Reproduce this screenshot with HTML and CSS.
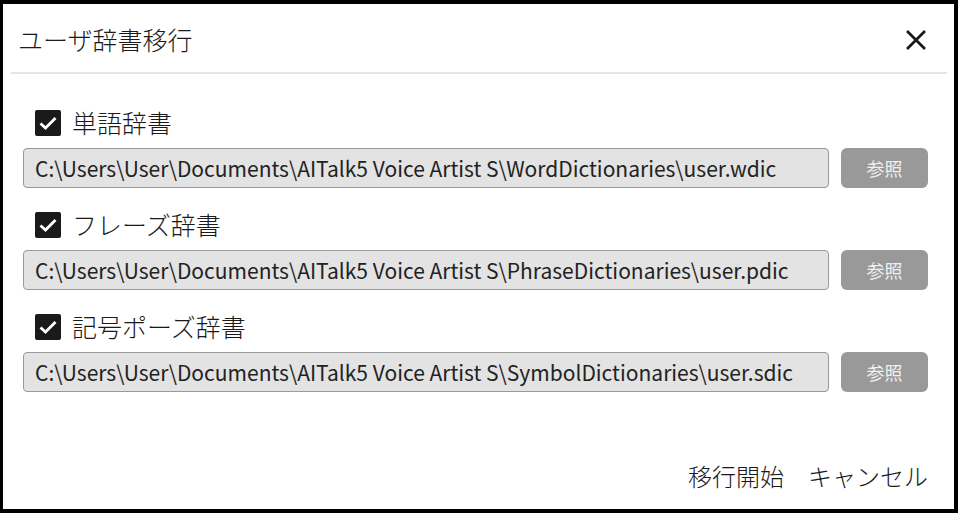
FILE: index.html
```html
<!DOCTYPE html>
<html lang="ja">
<head>
<meta charset="utf-8">
<link rel="stylesheet" href="styles.css">
</head>
<body>
<div class="dialog">
  <div class="header">
    <div class="title">ユーザ辞書移行</div>
    <svg class="close" width="22" height="22" viewBox="0 0 22 22"><path d="M2 2 L20 20 M20 2 L2 20" stroke="#1a1a1a" stroke-width="2.8" fill="none"/></svg>
  </div>
  <div class="sep"></div>
  <div class="body">
    <div class="group">
      <div class="check-row">
        <span class="box"><svg width="26" height="26" viewBox="0 0 26 26"><path d="M5.5 13.5 L10.5 18 L20.5 8" stroke="#fff" stroke-width="2.8" fill="none"/></svg></span>
        <span class="label">単語辞書</span>
      </div>
      <div class="path-row">
        <div class="path">C:\Users\User\Documents\AITalk5 Voice Artist S\WordDictionaries\user.wdic</div>
        <button class="browse">参照</button>
      </div>
    </div>
    <div class="group">
      <div class="check-row">
        <span class="box"><svg width="26" height="26" viewBox="0 0 26 26"><path d="M5.5 13.5 L10.5 18 L20.5 8" stroke="#fff" stroke-width="2.8" fill="none"/></svg></span>
        <span class="label">フレーズ辞書</span>
      </div>
      <div class="path-row">
        <div class="path">C:\Users\User\Documents\AITalk5 Voice Artist S\PhraseDictionaries\user.pdic</div>
        <button class="browse">参照</button>
      </div>
    </div>
    <div class="group">
      <div class="check-row">
        <span class="box"><svg width="26" height="26" viewBox="0 0 26 26"><path d="M5.5 13.5 L10.5 18 L20.5 8" stroke="#fff" stroke-width="2.8" fill="none"/></svg></span>
        <span class="label">記号ポーズ辞書</span>
      </div>
      <div class="path-row">
        <div class="path">C:\Users\User\Documents\AITalk5 Voice Artist S\SymbolDictionaries\user.sdic</div>
        <button class="browse">参照</button>
      </div>
    </div>
  </div>
  <div class="footer">
    <span class="action">移行開始</span>
    <span class="action">キャンセル</span>
  </div>
</div>
</body>
</html>
```

FILE: styles.css
```css
html, body {
  margin: 0;
  padding: 0;
  background: #000;
}
body {
  width: 958px;
  height: 513px;
  padding: 4px 4px 4px 3px;
  box-sizing: border-box;
  font-family: "Noto Sans CJK JP", "Noto Sans", sans-serif;
  color: #1a1a1a;
}
.dialog {
  background: #fff;
  height: 505px;
  display: flex;
  flex-direction: column;
}
.header {
  display: flex;
  align-items: center;
  justify-content: space-between;
  height: 68px;
  padding: 0 27px 0 15px;
}
.title {
  font-size: 25px;
  line-height: 34px;
  font-weight: 300;
  padding-top: 2px;
}
.close {
  display: block;
  margin-top: 4px;
}
.sep {
  height: 2px;
  background: #e5e5e5;
  margin: 0 7px 0 8px;
}
.body {
  display: flex;
  flex-direction: column;
  gap: 20px;
  padding: 32px 26px 0 20px;
  flex: 1;
}
.group {
  display: flex;
  flex-direction: column;
  gap: 9px;
}
.check-row {
  display: flex;
  align-items: center;
  gap: 11px;
  padding-left: 12px;
  height: 33px;
}
.box {
  width: 26px;
  height: 26px;
  background: #1a1a1a;
  border-radius: 2px;
  display: flex;
  align-items: center;
  justify-content: center;
}
.box svg {
  display: block;
}
.label {
  font-size: 25px;
  line-height: 33px;
  font-weight: 300;
}
.path-row {
  display: flex;
  gap: 12px;
  height: 40px;
}
.path {
  flex: 1;
  background: #e3e3e3;
  border: 1px solid #9a9a9a;
  border-radius: 4px;
  font-size: 21px;
  line-height: 38px;
  padding: 0 11px;
  color: #222;
  white-space: nowrap;
  overflow: hidden;
}
.browse {
  width: 87px;
  height: 40px;
  background: #999;
  border: none;
  border-radius: 6px;
  color: #f0f0f0;
  font-family: "Noto Sans CJK JP", sans-serif;
  font-size: 18px;
  padding: 0;
}
.footer {
  display: flex;
  justify-content: flex-end;
  gap: 24px;
  padding: 0 26px 16px 0;
}
.action {
  font-size: 24px;
  line-height: 34px;
  font-weight: 300;
  color: #1a1a1a;
}
```
